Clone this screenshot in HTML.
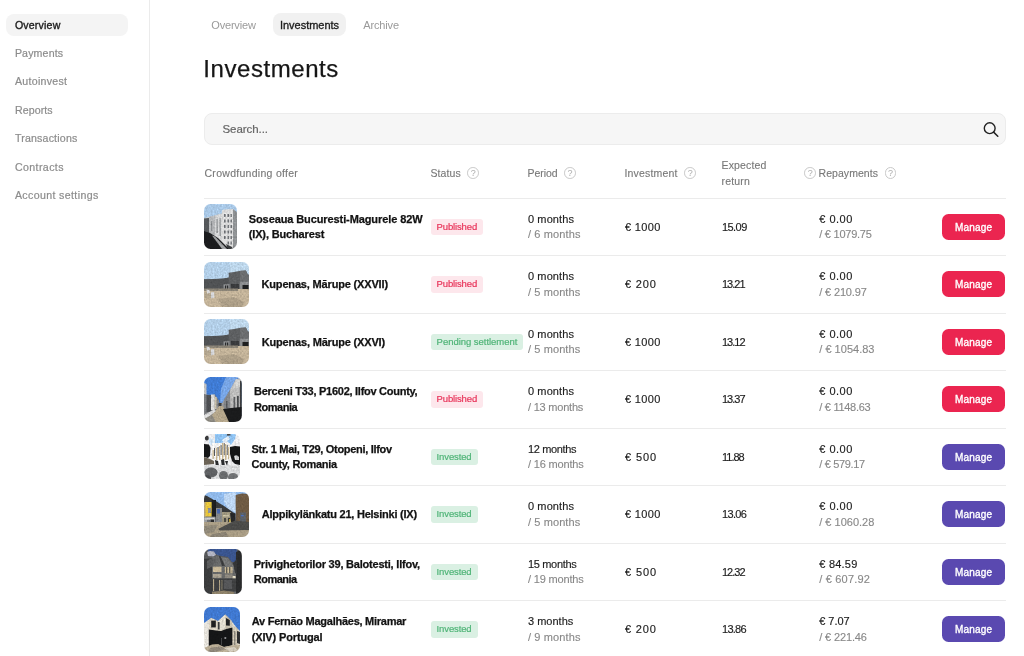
<!DOCTYPE html>
<html lang="en"><head><meta charset="utf-8"><title>Investments</title><style>
*{box-sizing:border-box;margin:0;padding:0}
html,body{width:1024px;height:656px;overflow:hidden;background:#fff}
body{font-family:"Liberation Sans",sans-serif;font-size:11px;color:#1c1c1c;position:relative;will-change:transform}
.a{position:absolute;white-space:nowrap;line-height:14px}
.side{position:absolute;left:0;top:0;width:150px;height:656px;border-right:1px solid #ebebeb}
.pill{position:absolute;background:#f4f4f4;border-radius:8px}
.nav{color:#8c8c8c;font-size:10.6px;-webkit-text-stroke:0.2px #8c8c8c}
.nav.on{color:#1c1c1c;-webkit-text-stroke:0.35px #1c1c1c}
.tab{color:#9a9a9a;font-size:11px}
.tab.on{color:#1c1c1c;-webkit-text-stroke:0.32px #1c1c1c}
h1{position:absolute;left:203.3px;top:53.9px;font-size:24px;letter-spacing:0.56px;-webkit-text-stroke:0.25px #161616;font-weight:400;line-height:30px;color:#161616;white-space:nowrap}
.search{position:absolute;left:203.5px;top:113px;width:802px;height:31.5px;background:#f6f6f6;border:1px solid #ececec;border-radius:8px}
.sp{color:#666;font-size:11.5px;-webkit-text-stroke:0.2px #666}
.th{color:#787878;font-size:10.5px;-webkit-text-stroke:0.12px #787878}
.q{position:absolute;width:11.7px;height:11.7px;border:1px solid #c9c9c9;border-radius:50%;color:#adadad;font-size:9px;line-height:10.2px;text-align:center}
.hr{position:absolute;left:204px;width:801.5px;height:1px;background:#ebebeb}
.thumb{position:absolute;left:204.25px;height:45px;border-radius:6.5px;overflow:hidden}
.thumb svg{display:block}
.name{font-weight:700;font-size:11px;color:#121212;-webkit-text-stroke:0.25px #121212}
.v{color:#1c1c1c;font-size:11px;-webkit-text-stroke:0.15px #1c1c1c}
.g{color:#888;font-size:11px;-webkit-text-stroke:0.12px #888}
.badge{position:absolute;left:430.75px;height:16.75px;border-radius:3px}
.bt{font-size:9.5px}
.pub{background:#fde7ec}
.pubt{color:#e8345a;-webkit-text-stroke:0.2px #e8345a}
.inv{background:#daf0e3}
.invt{color:#4fb477;-webkit-text-stroke:0.2px #4fb477}
.btn{position:absolute;left:942px;width:63px;height:26px;border-radius:6.5px}
.btt{color:#fff;font-size:10px;-webkit-text-stroke:0.35px #fff}
.red{background:#eb2550}
.pur{background:#5a49b0}
</style></head><body>
<svg width="0" height="0" style="position:absolute"><defs><filter id="bl" x="0" y="0" width="100%" height="100%" color-interpolation-filters="sRGB"><feGaussianBlur stdDeviation="0.55" edgeMode="duplicate" result="b"/><feTurbulence type="fractalNoise" baseFrequency="0.55" numOctaves="2" seed="7" result="n"/><feColorMatrix in="n" type="matrix" values="0.6 0.6 0 0 -0.1  0.6 0.6 0 0 -0.1  0.6 0.6 0 0 -0.1  0 0 0 0 1" result="g"/><feComposite in="b" in2="g" operator="arithmetic" k1="0.36" k2="0.82" k3="0" k4="0"/></filter></defs></svg>
<div class="side"></div>
<div class="pill" style="left:6px;top:14px;width:122px;height:22px"></div>
<div class="a nav on" style="left:14.90px;top:17.78px;letter-spacing:0.179px">Overview</div>
<div class="a nav" style="left:14.90px;top:46.13px;letter-spacing:0.159px">Payments</div>
<div class="a nav" style="left:14.90px;top:74.48px;letter-spacing:0.298px">Autoinvest</div>
<div class="a nav" style="left:14.90px;top:102.83px;letter-spacing:0.109px">Reports</div>
<div class="a nav" style="left:14.90px;top:131.18px;letter-spacing:0.194px">Transactions</div>
<div class="a nav" style="left:14.90px;top:159.53px;letter-spacing:0.407px">Contracts</div>
<div class="a nav" style="left:14.90px;top:187.88px;letter-spacing:0.372px">Account settings</div>
<div class="pill" style="left:272.5px;top:13px;width:73.75px;height:23px;background:#f1f1f1"></div>
<div class="a tab" style="left:211.25px;top:17.89px;letter-spacing:-0.179px">Overview</div>
<div class="a tab on" style="left:280.00px;top:17.89px;letter-spacing:-0.030px">Investments</div>
<div class="a tab" style="left:363.25px;top:17.89px;letter-spacing:-0.144px">Archive</div>
<h1>Investments</h1>
<div class="search"></div>
<div class="a sp" style="left:222.50px;top:121.72px;letter-spacing:-0.062px">Search...</div>
<svg style="position:absolute;left:982px;top:118.5px" width="20" height="20" viewBox="0 0 20 20"><circle cx="7.7" cy="9.2" r="5.4" fill="none" stroke="#222" stroke-width="1.4"/><path d="M11.6 13.1 L15.8 17.2" stroke="#222" stroke-width="1.5" stroke-linecap="round"/></svg>
<div class="a th" style="left:204.50px;top:166.06px;letter-spacing:0.284px">Crowdfunding offer</div>
<div class="a th" style="left:430.50px;top:166.06px;letter-spacing:0.085px">Status</div>
<div class="q" style="left:467.40px;top:167.25px">?</div>
<div class="a th" style="left:527.50px;top:166.06px;letter-spacing:-0.065px">Period</div>
<div class="q" style="left:564.15px;top:167.25px">?</div>
<div class="a th" style="left:624.50px;top:166.06px;letter-spacing:0.173px">Investment</div>
<div class="q" style="left:684.40px;top:167.25px">?</div>
<div class="a th" style="left:721.50px;top:158.11px;letter-spacing:0.163px">Expected</div>
<div class="a th" style="left:721.50px;top:173.66px;letter-spacing:0.193px">return</div>
<div class="q" style="left:804.45px;top:167.25px">?</div>
<div class="a th" style="left:818.50px;top:166.06px;letter-spacing:0.058px">Repayments</div>
<div class="q" style="left:884.65px;top:167.25px">?</div>
<div class="hr" style="top:197.5px"></div>
<div class="thumb" style="top:204.00px;width:33px"><svg width="33" height="45" viewBox="0 0 33 45" preserveAspectRatio="none"><g filter="url(#bl)"><rect width="33" height="45" fill="#a9c8e6"/>
<polygon points="0,14 5,13 18,9.5 18,45 0,45" fill="#c4c6c8"/>
<polygon points="0,14.5 5,14 5,45 0,45" fill="#55585b"/>
<polygon points="5,13 11,11.5 11,34 5,30" fill="#b4b6b8"/>
<polygon points="11,11.5 18,9.5 18,40 11,34" fill="#d4d5d6"/>
<polygon points="18,6.5 20,5.5 29,5 29,45 18,45" fill="#dcdcdc"/>
<polygon points="29,5 33,8 33,45 29,45" fill="#8f9294"/>
<g fill="#6d7074"><rect x="20" y="10" width="1.6" height="3"/><rect x="23.5" y="10" width="1.6" height="3"/><rect x="26.5" y="10" width="1.4" height="3"/>
<rect x="20" y="15.5" width="1.6" height="3"/><rect x="23.5" y="15.5" width="1.6" height="3"/><rect x="26.5" y="15.5" width="1.4" height="3"/>
<rect x="20" y="21" width="1.6" height="3"/><rect x="23.5" y="21" width="1.6" height="3"/><rect x="26.5" y="21" width="1.4" height="3"/>
<rect x="20" y="26.5" width="1.6" height="3"/><rect x="23.5" y="26.5" width="1.6" height="3"/><rect x="26.5" y="26.5" width="1.4" height="3"/>
<rect x="20" y="32" width="1.6" height="3"/><rect x="23.5" y="32" width="1.6" height="3"/><rect x="26.5" y="32" width="1.4" height="3"/>
<rect x="23.5" y="37.5" width="1.6" height="3"/><rect x="26.5" y="37.5" width="1.4" height="3"/></g>
<g fill="#8a8d90"><rect x="12.5" y="15" width="1.2" height="14"/><rect x="15.5" y="14" width="1.2" height="18"/><rect x="7" y="17" width="1.2" height="10"/></g>
<polygon points="0,27 6,29 14,34 22,42 26,45 0,45" fill="#1b1c1e"/>
<polygon points="8,31.5 11,32.5 23,45 18,45" fill="#9ea0a2"/>
<polygon points="22,40 28,43 29,45 24,45" fill="#3a3c3e"/></g></svg></div>
<div class="a name" style="left:248.75px;top:211.79px;letter-spacing:-0.099px">Soseaua Bucuresti-Magurele 82W</div>
<div class="a name" style="left:248.75px;top:227.44px;letter-spacing:-0.148px">(IX), Bucharest</div>
<div class="badge pub" style="top:218.70px;width:52.25px"></div>
<div class="a bt pubt" style="left:436.60px;top:219.76px;letter-spacing:-0.145px">Published</div>
<div class="a v" style="left:528.00px;top:211.79px;letter-spacing:0.100px">0 months</div>
<div class="a g" style="left:528.00px;top:227.44px;letter-spacing:0.120px">/ 6 months</div>
<div class="a v" style="left:625.00px;top:219.84px;letter-spacing:0.335px">€ 1000</div>
<div class="a v" style="left:722.00px;top:219.84px;letter-spacing:-0.562px">15.09</div>
<div class="a v" style="left:819.25px;top:211.79px;letter-spacing:0.483px">€ 0.00</div>
<div class="a g" style="left:819.25px;top:227.44px;letter-spacing:-0.244px">/ € 1079.75</div>
<div class="btn red" style="top:213.75px"></div>
<div class="a btt" style="left:955.00px;top:220.73px;letter-spacing:0.202px">Manage</div>
<div class="hr" style="top:255.00px"></div>
<div class="thumb" style="top:261.50px;width:45px"><svg width="45" height="45" viewBox="0 0 45 45" preserveAspectRatio="none"><g filter="url(#bl)"><rect width="45" height="45" fill="#b3cfe8"/>
<rect x="26" width="19" height="14" fill="#bdd6ea"/>
<rect y="17.3" width="45" height="10" fill="#4b4d4f"/>
<polygon points="0,17.5 10,17 18,16.5 25,15.5 25,27 0,27" fill="#505254"/>
<polygon points="24.7,10.7 30,10 37,8.8 42,8.6 43.5,12 45,13 45,30 24.7,30" fill="#5d5f61"/>
<polygon points="36,9 42,8.6 43.5,12 45,13 45,20 36,20" fill="#6b6d6f"/>
<rect x="35.8" y="19.8" width="9.2" height="10" fill="#8c8e90"/>
<rect x="38.5" y="23" width="6" height="6.5" fill="#1d1e1f"/>
<rect x="19.5" y="22.2" width="6" height="5" fill="#8a8c8e"/>
<rect x="21" y="23.5" width="1.2" height="3.5" fill="#2a2b2c"/><rect x="23" y="23.5" width="1.2" height="3.5" fill="#2a2b2c"/>
<rect x="27" y="22" width="8" height="5.5" fill="#3a3b3d"/>
<rect y="27" width="45" height="18" fill="#c3b399"/>
<rect y="26.5" width="34" height="2.5" fill="#8d8678"/>
<polygon points="14,37 30,35 40,40 38,45 18,45" fill="#ad9f88"/>
<polygon points="0,30 12,32 6,36 0,36" fill="#b3a68f"/>
<polygon points="2.5,27.5 5.5,28 6,31 3,31.5" fill="#d9d9da"/>
<polygon points="7,30.5 10,30 10.5,35.5 7,36.5" fill="#d4d5d8"/></g></svg></div>
<div class="a name" style="left:261.50px;top:277.34px;letter-spacing:-0.165px">Kupenas, Mārupe (XXVII)</div>
<div class="badge pub" style="top:276.20px;width:52.25px"></div>
<div class="a bt pubt" style="left:436.60px;top:277.26px;letter-spacing:-0.145px">Published</div>
<div class="a v" style="left:528.00px;top:269.29px;letter-spacing:0.100px">0 months</div>
<div class="a g" style="left:528.00px;top:284.94px;letter-spacing:0.094px">/ 5 months</div>
<div class="a v" style="left:625.00px;top:277.34px;letter-spacing:0.826px">€ 200</div>
<div class="a v" style="left:722.00px;top:277.34px;letter-spacing:-1.000px">13.21</div>
<div class="a v" style="left:819.25px;top:269.29px;letter-spacing:0.483px">€ 0.00</div>
<div class="a g" style="left:819.25px;top:284.94px;letter-spacing:-0.151px">/ € 210.97</div>
<div class="btn red" style="top:271.25px"></div>
<div class="a btt" style="left:955.00px;top:278.24px;letter-spacing:0.202px">Manage</div>
<div class="hr" style="top:312.50px"></div>
<div class="thumb" style="top:319.00px;width:45px"><svg width="45" height="45" viewBox="0 0 45 45" preserveAspectRatio="none"><g filter="url(#bl)"><rect width="45" height="45" fill="#b3cfe8"/>
<rect x="26" width="19" height="14" fill="#bdd6ea"/>
<rect y="17.3" width="45" height="10" fill="#4b4d4f"/>
<polygon points="0,17.5 10,17 18,16.5 25,15.5 25,27 0,27" fill="#505254"/>
<polygon points="24.7,10.7 30,10 37,8.8 42,8.6 43.5,12 45,13 45,30 24.7,30" fill="#5d5f61"/>
<polygon points="36,9 42,8.6 43.5,12 45,13 45,20 36,20" fill="#6b6d6f"/>
<rect x="35.8" y="19.8" width="9.2" height="10" fill="#8c8e90"/>
<rect x="38.5" y="23" width="6" height="6.5" fill="#1d1e1f"/>
<rect x="19.5" y="22.2" width="6" height="5" fill="#8a8c8e"/>
<rect x="21" y="23.5" width="1.2" height="3.5" fill="#2a2b2c"/><rect x="23" y="23.5" width="1.2" height="3.5" fill="#2a2b2c"/>
<rect x="27" y="22" width="8" height="5.5" fill="#3a3b3d"/>
<rect y="27" width="45" height="18" fill="#c3b399"/>
<rect y="26.5" width="34" height="2.5" fill="#8d8678"/>
<polygon points="14,37 30,35 40,40 38,45 18,45" fill="#ad9f88"/>
<polygon points="0,30 12,32 6,36 0,36" fill="#b3a68f"/>
<polygon points="2.5,27.5 5.5,28 6,31 3,31.5" fill="#d9d9da"/>
<polygon points="7,30.5 10,30 10.5,35.5 7,36.5" fill="#d4d5d8"/></g></svg></div>
<div class="a name" style="left:261.75px;top:334.84px;letter-spacing:-0.181px">Kupenas, Mārupe (XXVI)</div>
<div class="badge inv" style="top:333.70px;width:92.25px"></div>
<div class="a bt invt" style="left:436.60px;top:334.76px;letter-spacing:-0.031px">Pending settlement</div>
<div class="a v" style="left:528.00px;top:326.79px;letter-spacing:0.100px">0 months</div>
<div class="a g" style="left:528.00px;top:342.44px;letter-spacing:0.094px">/ 5 months</div>
<div class="a v" style="left:625.00px;top:334.84px;letter-spacing:0.335px">€ 1000</div>
<div class="a v" style="left:722.00px;top:334.84px;letter-spacing:-1.000px">13.12</div>
<div class="a v" style="left:819.25px;top:326.79px;letter-spacing:0.483px">€ 0.00</div>
<div class="a g" style="left:819.25px;top:342.44px;letter-spacing:0.018px">/ € 1054.83</div>
<div class="btn red" style="top:328.75px"></div>
<div class="a btt" style="left:955.00px;top:335.74px;letter-spacing:0.202px">Manage</div>
<div class="hr" style="top:370.00px"></div>
<div class="thumb" style="top:376.50px;width:37.5px"><svg width="37.5" height="45" viewBox="0 0 37.5 45" preserveAspectRatio="none"><g filter="url(#bl)"><rect width="37.5" height="45" fill="#4a83d8"/>
<polygon points="0,0 22,0 17,12 16,27 0,17" fill="#3f7bd4"/>
<polygon points="22,0 34,0 31.7,2.5 26,13 20,23 16,27 17,12" fill="#78a6e6"/>
<rect x="0" y="26" width="37.5" height="19" fill="#8f8b82"/>
<polygon points="0,6 2.5,7 2.5,32 0,33" fill="#c2c3c4"/>
<polygon points="0,17 2.5,17.5 7,18 10.7,17.5 14,22 16,27 16,33 0,40" fill="#7b7d80"/>
<rect x="2.5" y="18" width="4.5" height="17" fill="#4d4f52"/>
<rect x="7" y="17.5" width="3.7" height="15.5" fill="#dcdcda"/>
<rect x="10.7" y="20" width="2" height="12" fill="#c9c1ac"/>
<rect x="12.7" y="23" width="2" height="9" fill="#8a8c8e"/>
<polygon points="31.7,2.5 35,1.5 37.5,2 37.5,45 20,45 17,28 20,23 26,13" fill="#a0a1a2"/>
<polygon points="26,13 31.7,2.5 35,1.5 35.5,32 27,32" fill="#bdbdbc"/>
<polygon points="31.7,2.5 35,1.5 36,3 36,10 29,12" fill="#d2d2d0"/>
<polygon points="20,23 26,13 26,32 19,32" fill="#85878a"/>
<rect x="36" y="4" width="1.5" height="41" fill="#3d3e40"/>
<rect x="29.5" y="20" width="1.8" height="12" fill="#5c5e60"/><rect x="33" y="19" width="1.8" height="13" fill="#4a4c4e"/>
<rect x="22" y="24" width="1.5" height="7" fill="#55575a"/>
<rect x="14.5" y="26" width="3" height="4" fill="#3a3c3e"/>
<polygon points="15,29 19,29 26,45 3,45" fill="#b4a68b"/>
<polygon points="19,32 27,31 37.5,30 37.5,44 30,45 25,45" fill="#1a1b1c"/>
<polygon points="0,38 10,32.5 12,34 3,41 0,42" fill="#d9d9d9"/>
<polygon points="0,42 8,38 12,45 0,45" fill="#8d8a82"/></g></svg></div>
<div class="a name" style="left:254.00px;top:384.29px;letter-spacing:-0.267px">Berceni T33, P1602, Ilfov County,</div>
<div class="a name" style="left:254.00px;top:399.94px;letter-spacing:-0.457px">Romania</div>
<div class="badge pub" style="top:391.20px;width:52.25px"></div>
<div class="a bt pubt" style="left:436.60px;top:392.26px;letter-spacing:-0.145px">Published</div>
<div class="a v" style="left:528.00px;top:384.29px;letter-spacing:0.100px">0 months</div>
<div class="a g" style="left:528.00px;top:399.94px;letter-spacing:-0.213px">/ 13 months</div>
<div class="a v" style="left:625.00px;top:392.34px;letter-spacing:0.335px">€ 1000</div>
<div class="a v" style="left:722.00px;top:392.34px;letter-spacing:-1.000px">13.37</div>
<div class="a v" style="left:819.25px;top:384.29px;letter-spacing:0.483px">€ 0.00</div>
<div class="a g" style="left:819.25px;top:399.94px;letter-spacing:-0.284px">/ € 1148.63</div>
<div class="btn red" style="top:386.25px"></div>
<div class="a btt" style="left:955.00px;top:393.24px;letter-spacing:0.202px">Manage</div>
<div class="hr" style="top:427.50px"></div>
<div class="thumb" style="top:434.00px;width:36px"><svg width="36" height="45" viewBox="0 0 36 45" preserveAspectRatio="none"><g filter="url(#bl)"><rect width="36" height="45" fill="#ececee"/>
<polygon points="11,0 32,0 31,5 27,11 23,7 17,9 11,10" fill="#8ec1f0"/>
<polygon points="5,4 9,5 11,10 8,12 5,9" fill="#cfe4f6"/>
<polygon points="18,6 24,2 26,5 20,9" fill="#e4eef8"/>
<ellipse cx="2.8" cy="4" rx="2" ry="2.5" fill="#3b3c3d"/>
<rect x="23" y="0" width="3.5" height="1.6" fill="#4a4b4c"/>
<path d="M0 10 L5 10.5 L6.5 14 L6 22 L4 24 L0 23 Z" fill="#161718"/>
<path d="M26 13 L31 12 L36 12.5 L36 31 L31 30 L28 27 L26 20 Z" fill="#141516"/>
<path d="M30 22 Q33 20 35 23 L35 26 L31 26 Z" fill="#c9cacb"/>
<rect x="8" y="9" width="18" height="21" fill="#f2f2f1"/>
<g fill="#c9b58d"><rect x="8.5" y="16" width="1.2" height="9"/><rect x="12" y="14" width="1.2" height="12"/><rect x="15" y="12" width="1.2" height="14"/><rect x="18" y="9" width="1.4" height="17"/><rect x="21" y="10" width="1.4" height="16"/><rect x="24" y="13" width="1.2" height="12"/></g>
<g fill="#55575a"><rect x="10" y="14" width="1" height="8"/><rect x="13.6" y="13" width="1" height="9"/><rect x="16.6" y="11" width="1" height="10"/><rect x="19.8" y="9" width="0.9" height="12"/><rect x="22.8" y="11" width="0.9" height="10"/></g>
<path d="M0 23 L6 25 L10 27 L10 30 L0 31 Z" fill="#6b6356"/>
<path d="M11 26 L14 27 L15 32 L12 33 Z M17 26 L20 25 L21 33 L18 34 Z M21 27 L24 27 L23 32 Z" fill="#2b2c2e"/>
<rect x="0" y="31" width="36" height="14" fill="#d9dadb"/>
<ellipse cx="7" cy="38.5" rx="6.5" ry="5" fill="#5f6163"/>
<ellipse cx="19.5" cy="41.5" rx="4.5" ry="4.5" fill="#6a6c6e"/>
<ellipse cx="29" cy="43" rx="5" ry="4" fill="#707274"/>
<ellipse cx="3" cy="44" rx="4" ry="3" fill="#4a4c4e"/></g></svg></div>
<div class="a name" style="left:251.50px;top:441.79px;letter-spacing:-0.304px">Str. 1 Mai, T29, Otopeni, Ilfov</div>
<div class="a name" style="left:251.50px;top:457.44px;letter-spacing:-0.286px">County, Romania</div>
<div class="badge inv" style="top:448.70px;width:46.75px"></div>
<div class="a bt invt" style="left:436.60px;top:449.76px;letter-spacing:-0.123px">Invested</div>
<div class="a v" style="left:528.00px;top:441.79px;letter-spacing:-0.368px">12 months</div>
<div class="a g" style="left:528.00px;top:457.44px;letter-spacing:-0.165px">/ 16 months</div>
<div class="a v" style="left:625.00px;top:449.84px;letter-spacing:0.882px">€ 500</div>
<div class="a v" style="left:722.00px;top:449.84px;letter-spacing:-1.000px">11.88</div>
<div class="a v" style="left:819.25px;top:441.79px;letter-spacing:0.483px">€ 0.00</div>
<div class="a g" style="left:819.25px;top:457.44px;letter-spacing:-0.351px">/ € 579.17</div>
<div class="btn pur" style="top:443.75px"></div>
<div class="a btt" style="left:955.00px;top:450.74px;letter-spacing:0.202px">Manage</div>
<div class="hr" style="top:485.00px"></div>
<div class="thumb" style="top:491.50px;width:45px"><svg width="45" height="45" viewBox="0 0 45 45" preserveAspectRatio="none"><g filter="url(#bl)"><rect width="45" height="45" fill="#90b9ea"/>
<polygon points="20,2 32,0 32,21 24,17 20,10" fill="#bdd6f3"/>
<polygon points="0,3 3,4 10,8 20,14 31,21.4 31,30 0,30" fill="#38393a"/>
<rect x="0" y="10" width="7.8" height="14.7" fill="#e7c53c"/>
<rect x="0" y="10" width="1.5" height="14.7" fill="#b7a680"/>
<rect x="4" y="16" width="3" height="5" fill="#8d9096"/>
<rect x="7.8" y="8" width="4.2" height="18" fill="#1d1e1f"/>
<rect x="0" y="24.7" width="11.5" height="10" fill="#9d9fa1"/>
<rect x="0.5" y="26" width="10" height="1.5" fill="#cfcfcd"/>
<rect x="3" y="28" width="3" height="6" fill="#707274"/><rect x="6.5" y="27.5" width="3.5" height="5" fill="#2b2c2d"/>
<rect x="12" y="16" width="6" height="16" fill="#868889"/>
<rect x="13" y="17" width="3" height="4.5" fill="#4968ae"/>
<rect x="18" y="20" width="9" height="12" fill="#9f977f"/>
<rect x="19" y="23" width="6" height="1.5" fill="#c8bfa2"/>
<rect x="20" y="26" width="2" height="5" fill="#4c4a44"/><rect x="24" y="26" width="2" height="5" fill="#3c3a36"/>
<rect x="25.3" y="27" width="1.2" height="3.5" fill="#e2c13b"/>
<polygon points="26,21 31.7,21.4 31.7,30 27,30" fill="#27282a"/>
<polygon points="31.7,3 38,1.5 45,2 45,34 31.7,33" fill="#6e5a43"/>
<rect x="36" y="20.5" width="6" height="9.5" fill="#5c6168"/>
<rect x="37" y="23" width="2.5" height="1.3" fill="#4a6fc0"/>
<rect x="0" y="30" width="45" height="15" fill="#a99d85"/>
<polygon points="14,37 31,28.5 45,30 45,38 16,38.5" fill="#4b4b49"/>
<polygon points="0,34 14,33 10,40 0,42" fill="#8f8878"/>
<polygon points="8,42 22,40 24,45 6,45" fill="#8a8273"/></g></svg></div>
<div class="a name" style="left:261.75px;top:507.34px;letter-spacing:-0.234px">Alppikylänkatu 21, Helsinki (IX)</div>
<div class="badge inv" style="top:506.20px;width:46.75px"></div>
<div class="a bt invt" style="left:436.60px;top:507.26px;letter-spacing:-0.123px">Invested</div>
<div class="a v" style="left:528.00px;top:499.29px;letter-spacing:0.100px">0 months</div>
<div class="a g" style="left:528.00px;top:514.94px;letter-spacing:0.094px">/ 5 months</div>
<div class="a v" style="left:625.00px;top:507.34px;letter-spacing:0.335px">€ 1000</div>
<div class="a v" style="left:722.00px;top:507.34px;letter-spacing:-0.674px">13.06</div>
<div class="a v" style="left:819.25px;top:499.29px;letter-spacing:0.483px">€ 0.00</div>
<div class="a g" style="left:819.25px;top:514.94px;letter-spacing:0.004px">/ € 1060.28</div>
<div class="btn pur" style="top:501.25px"></div>
<div class="a btt" style="left:955.00px;top:508.24px;letter-spacing:0.202px">Manage</div>
<div class="hr" style="top:542.50px"></div>
<div class="thumb" style="top:549.00px;width:37.5px"><svg width="37.5" height="45" viewBox="0 0 37.5 45" preserveAspectRatio="none"><g filter="url(#bl)"><rect width="37.5" height="45" fill="#58595b"/>
<polygon points="4,0 33,0 32,13 28,13 24,8 14.6,6.6 10,4 4,6" fill="#3a558f"/>
<polygon points="3,3 6,2 10,2.5 12,6 9,7.5 4,7" fill="#b1b3c1"/>
<polygon points="0,12 8,8 14.6,6.6 20,14 34,24 34,45 0,45" fill="#686969"/>
<polygon points="14.6,6.6 17,8 21,17 18,17" fill="#3c3d3e"/>
<polygon points="17,8 24,9 32,20 34,24 22,18" fill="#747575"/>
<polygon points="0,10 8,9 8,45 0,45" fill="#3b3c3d"/>
<polygon points="3,12 8,9 12,10 9,17 3,20" fill="#5b5c5d"/>
<rect x="9" y="17.7" width="8.5" height="5.3" fill="#c9b999"/>
<rect x="9" y="25" width="8.5" height="3.8" fill="#a9a191"/>
<rect x="20.8" y="18" width="7.8" height="6.3" fill="#c4b595"/>
<rect x="22.2" y="18" width="1.1" height="6.3" fill="#4a4a48"/><rect x="25.2" y="18" width="1.1" height="6.3" fill="#4a4a48"/>
<rect x="20.8" y="25.5" width="7.8" height="3.5" fill="#8f8a80"/>
<rect x="28.6" y="27" width="3" height="2.6" fill="#e0d8c0"/>
<rect x="28.6" y="33" width="2.5" height="2" fill="#a9a191"/>
<rect x="8" y="29.5" width="24" height="13" fill="#3f4041"/>
<rect x="9" y="30" width="1.1" height="12" fill="#b5a788"/><rect x="15" y="31" width="1.1" height="11" fill="#a99c80"/><rect x="17.5" y="31" width="0.9" height="10" fill="#8f866f"/>
<rect x="20" y="31" width="8" height="9" fill="#555658"/>
<polygon points="32,3 37.5,1 37.5,45 32,45" fill="#2a2b2c"/>
<polygon points="29,14 33,10 33,26 31,24" fill="#343536"/>
<polygon points="8,43 20,41.5 30,43 30,45 8,45" fill="#8d8169"/></g></svg></div>
<div class="a name" style="left:253.75px;top:556.79px;letter-spacing:-0.213px">Privighetorilor 39, Balotesti, Ilfov,</div>
<div class="a name" style="left:253.75px;top:572.44px;letter-spacing:-0.495px">Romania</div>
<div class="badge inv" style="top:563.70px;width:46.75px"></div>
<div class="a bt invt" style="left:436.60px;top:564.76px;letter-spacing:-0.123px">Invested</div>
<div class="a v" style="left:528.00px;top:556.79px;letter-spacing:-0.338px">15 months</div>
<div class="a g" style="left:528.00px;top:572.44px;letter-spacing:-0.165px">/ 19 months</div>
<div class="a v" style="left:625.00px;top:564.84px;letter-spacing:0.882px">€ 500</div>
<div class="a v" style="left:722.00px;top:564.84px;letter-spacing:-1.000px">12.32</div>
<div class="a v" style="left:819.25px;top:556.79px;letter-spacing:0.230px">€ 84.59</div>
<div class="a g" style="left:819.25px;top:572.44px;letter-spacing:0.186px">/ € 607.92</div>
<div class="btn pur" style="top:558.75px"></div>
<div class="a btt" style="left:955.00px;top:565.74px;letter-spacing:0.202px">Manage</div>
<div class="hr" style="top:600.00px"></div>
<div class="thumb" style="top:606.50px;width:36px"><svg width="36" height="45" viewBox="0 0 36 45" preserveAspectRatio="none"><g filter="url(#bl)"><rect width="36" height="45" fill="#3f78d0"/>
<polygon points="0,17 3,14 7.2,10.7 14.2,14 21.2,7.4 27,13.2 32,20 36,24 36,45 0,45" fill="#d9d2c3"/>
<polygon points="0,16 4.8,13 4.8,42 0,43" fill="#e6e3dc"/>
<polygon points="14.2,14 21.2,7.4 21.5,22 14.2,23" fill="#e2ddd0"/>
<polygon points="21.2,7.4 27,13.2 28,21 21.5,22" fill="#c9c1af"/>
<rect x="7.2" y="13.6" width="4.6" height="6.8" fill="#1e1f20"/>
<rect x="13.8" y="15" width="1.8" height="7.5" fill="#3c3d3e"/>
<polygon points="22,11 25.8,13 25.8,18.8 22,18.5" fill="#222324"/>
<polygon points="4.8,22.6 12,23.6 17,24 23,21.8 28.6,20.6 28.6,38.3 20,40 12,38 4.8,40" fill="#151617"/>
<circle cx="21.3" cy="31" r="1.1" fill="#8f9092"/>
<rect x="17" y="31" width="0.9" height="7" fill="#4a4b4c"/>
<polygon points="28.6,20.6 32,20 34,23 34,40 28.6,38.3" fill="#cfc7b4"/>
<polygon points="30,24 31.5,24 31.5,38 30,38" fill="#8a857a"/>
<polygon points="33,24 36,25 36,37 33,36" fill="#2f3031"/>
<polygon points="0,41 8,37.5 14,37 20,40 28.6,38.3 36,38 36,45 0,45" fill="#b9ad95"/>
<polygon points="6,41 16,39.5 22,42 12,45 4,45" fill="#8f877a"/>
<polygon points="20,41 30,40 34,43 26,45" fill="#d6cfc0"/></g></svg></div>
<div class="a name" style="left:251.75px;top:614.29px;letter-spacing:-0.259px">Av Fernão Magalhães, Miramar</div>
<div class="a name" style="left:251.75px;top:629.94px;letter-spacing:-0.147px">(XIV) Portugal</div>
<div class="badge inv" style="top:621.20px;width:46.75px"></div>
<div class="a bt invt" style="left:436.60px;top:622.26px;letter-spacing:-0.123px">Invested</div>
<div class="a v" style="left:528.00px;top:614.29px">3 months</div>
<div class="a g" style="left:528.00px;top:629.94px;letter-spacing:0.120px">/ 9 months</div>
<div class="a v" style="left:625.00px;top:622.34px;letter-spacing:0.826px">€ 200</div>
<div class="a v" style="left:722.00px;top:622.34px;letter-spacing:-0.729px">13.86</div>
<div class="a v" style="left:819.25px;top:614.29px;letter-spacing:-0.035px">€ 7.07</div>
<div class="a g" style="left:819.25px;top:629.94px;letter-spacing:-0.141px">/ € 221.46</div>
<div class="btn pur" style="top:616.25px"></div>
<div class="a btt" style="left:955.00px;top:623.24px;letter-spacing:0.202px">Manage</div>
<div class="hr" style="top:657.50px"></div>
</body></html>
